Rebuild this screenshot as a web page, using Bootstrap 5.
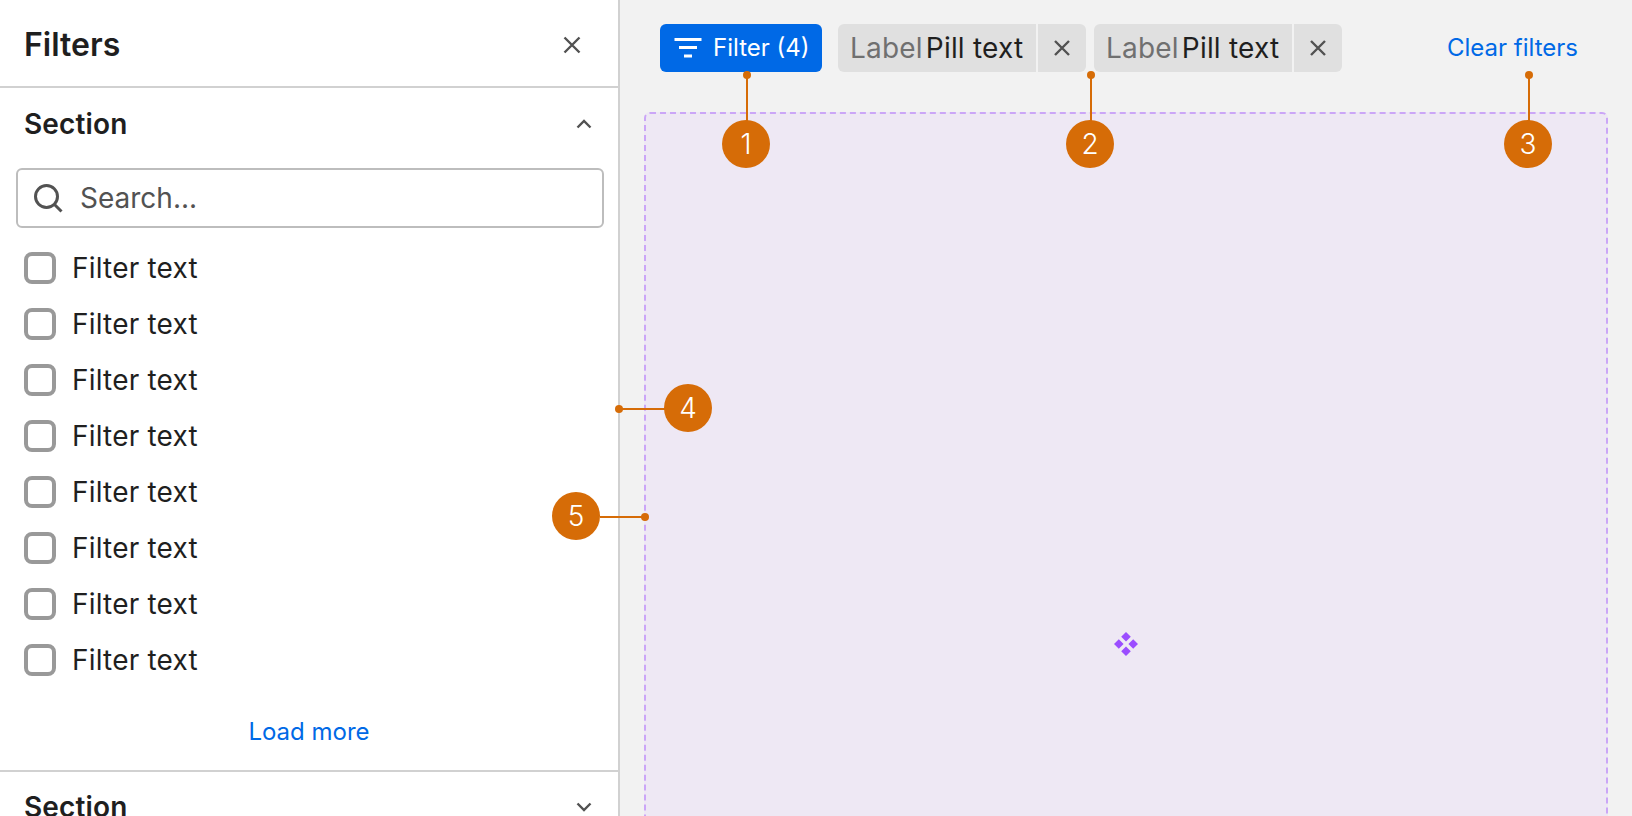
<!DOCTYPE html>
<html lang="en">
<head>
<meta charset="utf-8">
<title>Filters</title>
<link href="https://cdn.jsdelivr.net/npm/bootstrap@5.3.0/dist/css/bootstrap.min.css" rel="stylesheet">
<style>
html,body{height:100%;overflow:hidden}
body{font-family:Inter,"Liberation Sans",sans-serif;color:#1f1f1f;background:#f2f2f2;position:relative}
.shell{height:816px}
.side{width:620px;flex:none;background:#fff;border-right:2px solid #d1d1d1;overflow:hidden}
.side-head{height:88px;border-bottom:2px solid #d1d1d1;padding:3px 34px 0 24px}
.side-title{font-size:32px;font-weight:600;line-height:1;margin:0}
.sec-head{height:80px;padding:0 22px 8px 24px}
.sec-title{font-size:28px;font-weight:600;line-height:1;margin:0;letter-spacing:.15px}
.search-box{height:60px;margin:0 14px 0 16px;border:2px solid #bdbdbd;border-radius:6px;padding:0 14px;gap:16px;font-size:28px;color:#525252}
.filter-list{padding-top:12px}
.filter-row{height:56px;padding:0 24px;gap:16px;font-size:28px;letter-spacing:.2px}
.tick{width:32px;height:32px;border:4px solid #999;border-radius:8px;flex:none;background:#fff}
.more-row{height:82px;padding-top:6px;font-size:24px}
.lnk{color:#0069e6;text-decoration:none}
.clear-lnk{font-size:24px}
.sec-rule{border-top:2px solid #d1d1d1}
.main-area{min-width:0;padding:24px 24px 0 24px}
.bar{height:48px;padding:0 30px 0 16px}
.f-btn{height:48px;width:162px;flex:none;background:#0069e6;color:#fff;border-radius:6px;padding:0 0 0 14px;gap:11px;font-size:24px;border:0}
.pill{height:48px;background:#e0e0e0;border-radius:6px;font-size:28px;overflow:hidden;letter-spacing:.2px}
.pill-text{padding:0 12px;gap:3px;height:100%;width:198px}
.pill-label{color:#707070}
.pill-x{width:50px;height:100%;border-left:2px solid #f2f2f2}
.canvas{height:1064px;margin-top:40px;background:#eee8f4;border:2px dashed #cba6f7;border-radius:6px}
.ann{position:absolute;background:#d66c07}
.ann-dot{width:8px;height:8px;border-radius:50%}
.ann-num{width:48px;height:48px;border-radius:50%;color:#fff;font-size:28px;font-weight:300;line-height:48px;text-align:center}
.ico{display:block;flex:none}
</style>
</head>
<body>
<div class="shell d-flex">
  <aside class="side">
    <div class="side-head d-flex align-items-center justify-content-between">
      <h1 class="side-title">Filters</h1>
      <svg class="ico" width="24" height="24" viewBox="0 0 24 24" fill="none" stroke="#525252" stroke-width="2.400"><path d="M4.500 4.500l15 15M19.500 4.500l-15 15"/></svg>
    </div>
    <div class="sec-head d-flex align-items-center justify-content-between">
      <h2 class="sec-title">Section</h2>
      <svg class="ico" width="24" height="24" viewBox="0 0 24 24" fill="none" stroke="#525252" stroke-width="2.400"><path d="M5.500 15.500l6.500-6.500 6.500 6.500"/></svg>
    </div>
    <div class="search-box d-flex align-items-center">
      <svg class="ico" width="32" height="32" viewBox="0 0 32 32" fill="none" stroke="#525252" stroke-width="3"><circle cx="14.500" cy="14.500" r="11"/><path d="M22.500 22.500l7 7"/></svg>
      <span>Search...</span>
    </div>
    <div class="filter-list">
      <div class="filter-row d-flex align-items-center"><span class="tick"></span><span>Filter text</span></div>
      <div class="filter-row d-flex align-items-center"><span class="tick"></span><span>Filter text</span></div>
      <div class="filter-row d-flex align-items-center"><span class="tick"></span><span>Filter text</span></div>
      <div class="filter-row d-flex align-items-center"><span class="tick"></span><span>Filter text</span></div>
      <div class="filter-row d-flex align-items-center"><span class="tick"></span><span>Filter text</span></div>
      <div class="filter-row d-flex align-items-center"><span class="tick"></span><span>Filter text</span></div>
      <div class="filter-row d-flex align-items-center"><span class="tick"></span><span>Filter text</span></div>
      <div class="filter-row d-flex align-items-center"><span class="tick"></span><span>Filter text</span></div>
    </div>
    <div class="more-row d-flex align-items-center justify-content-center"><a class="lnk" href="#">Load more</a></div>
    <div class="sec-rule sec-head d-flex align-items-center justify-content-between">
      <h2 class="sec-title">Section</h2>
      <svg class="ico" width="24" height="24" viewBox="0 0 24 24" fill="none" stroke="#525252" stroke-width="2.400"><path d="M5.500 8.500l6.500 6.500 6.500-6.500"/></svg>
    </div>
  </aside>
  <main class="main-area flex-grow-1">
    <div class="bar d-flex align-items-center gap-2">
      <button class="f-btn d-flex align-items-center text-nowrap" type="button">
        <svg class="ico" width="28" height="24" viewBox="0 0 28 24" fill="none" stroke="#fff" stroke-width="2.800"><path d="M.5 3.500h27M5 11.500h18M10 20h8"/></svg>
        <span>Filter (4)</span>
      </button>
      <div class="pill d-flex align-items-center ms-2">
        <div class="pill-text d-flex align-items-center"><span class="pill-label">Label</span><span>Pill text</span></div>
        <div class="pill-x d-flex align-items-center justify-content-center"><svg class="ico" width="20" height="20" viewBox="0 0 20 20" fill="none" stroke="#525252" stroke-width="2.400"><path d="M3 3l14 14M17 3L3 17"/></svg></div>
      </div>
      <div class="pill d-flex align-items-center">
        <div class="pill-text d-flex align-items-center"><span class="pill-label">Label</span><span>Pill text</span></div>
        <div class="pill-x d-flex align-items-center justify-content-center"><svg class="ico" width="20" height="20" viewBox="0 0 20 20" fill="none" stroke="#525252" stroke-width="2.400"><path d="M3 3l14 14M17 3L3 17"/></svg></div>
      </div>
      <a class="lnk ms-auto clear-lnk" href="#">Clear filters</a>
    </div>
    <div class="canvas d-flex align-items-center justify-content-center">
      <svg class="ico" width="24" height="24" viewBox="0 0 24 24" fill="#9b4dff"><path d="M12 0l4.800 4.800L12 9.600 7.200 4.800zM4.800 7.200L9.600 12l-4.800 4.800L0 12zM19.200 7.200L24 12l-4.800 4.800L14.400 12zM12 14.400l4.800 4.800L12 24l-4.800-4.800z"/></svg>
    </div>
  </main>
</div>

<span class="ann ann-dot" style="left:743px;top:71px"></span><span class="ann" style="left:746px;top:75px;width:2px;height:46px"></span><span class="ann ann-num" style="left:722px;top:120px">1</span>
<span class="ann ann-dot" style="left:1087px;top:71px"></span><span class="ann" style="left:1090px;top:75px;width:2px;height:46px"></span><span class="ann ann-num" style="left:1066px;top:120px">2</span>
<span class="ann ann-dot" style="left:1525px;top:71px"></span><span class="ann" style="left:1528px;top:75px;width:2px;height:46px"></span><span class="ann ann-num" style="left:1504px;top:120px">3</span>
<span class="ann ann-dot" style="left:615px;top:405px"></span><span class="ann" style="left:619px;top:408px;width:46px;height:2px"></span><span class="ann ann-num" style="left:664px;top:384px">4</span>
<span class="ann ann-dot" style="left:641px;top:513px"></span><span class="ann" style="left:600px;top:516px;width:44px;height:2px"></span><span class="ann ann-num" style="left:552px;top:492px">5</span>
<script src="https://cdn.jsdelivr.net/npm/bootstrap@5.3.0/dist/js/bootstrap.bundle.min.js"></script>
</body>
</html>
